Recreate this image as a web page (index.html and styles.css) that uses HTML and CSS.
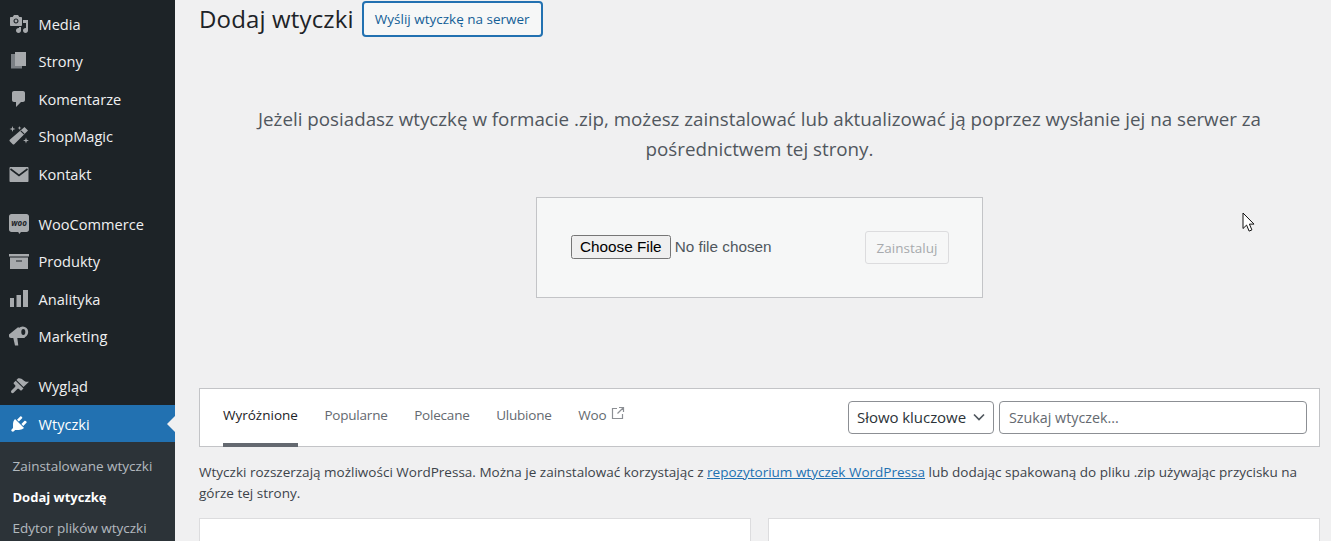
FILE: index.html
```html
<!DOCTYPE html>
<html lang="pl">
<head>
<meta charset="utf-8">
<title>Dodaj wtyczki</title>
<link rel="stylesheet" href="styles.css">
</head>
<body>
<div class="layout">
  <nav class="sidebar">
    <ul class="menu">
      <li class="item"><svg class="ico" viewBox="0 0 20 20"><path d="M13 11V4c0-.55-.45-1-1-1h-1.670L9 1H5L3.670 3H2c-.55 0-1 .45-1 1v7c0 .55.45 1 1 1h10c.55 0 1-.45 1-1zM7 4.500c1.380 0 2.500 1.120 2.500 2.500S8.380 9.500 7 9.500 4.500 8.380 4.500 7 5.620 4.500 7 4.500zM14 6h5v10.500c0 1.380-1.120 2.500-2.500 2.500S14 17.880 14 16.500s1.120-2.500 2.500-2.500c.17 0 .34.02.5.05V9h-3V6zm-4 8.050V13h2v3.500c0 1.380-1.120 2.500-2.500 2.500S7 17.880 7 16.500 8.120 14 9.500 14c.17 0 .34.02.5.05z" fill-rule="evenodd"/><circle cx="7" cy="7" r="1.400"/></svg>Media</li>
      <li class="item"><svg class="ico" viewBox="0 0 20 20"><path class="back" d="M6 3H2v14.500h11V15H6z"/><path d="M6 1h11v14H6z"/></svg>Strony</li>
      <li class="item"><svg class="ico" viewBox="0 0 20 20"><path d="M5 2h9c1.100 0 2 .9 2 2v7c0 1.100-.9 2-2 2h-2l-5 5v-5H5c-1.100 0-2-.9-2-2V4c0-1.100.9-2 2-2z"/></svg>Komentarze</li>
      <li class="item"><svg class="ico" viewBox="0 0 20 20"><path d="M15.500 1L19 4.500 5.500 18c-.7.7-1.300.7-2 0L1 15.500c-.7-.7-.7-1.300 0-2z"/><path d="M11.800 4.800l3.400 3.400" stroke="#1d2327" stroke-width="1.100"/><path d="M3.500 0l.7 2.300 2.300.7-2.300.7L3.500 6l-.7-2.300L.5 3l2.300-.7zM10.500 0l.5 1.500 1.500.5-1.500.5-.5 1.500-.5-1.500L8.500 2l1.500-.5zM17 11.500l.7 2.300 2.300.7-2.300.7-.7 2.300-.7-2.300-2.300-.7 2.300-.7z"/></svg>ShopMagic</li>
      <li class="item"><svg class="ico" viewBox="0 0 20 20"><path d="M1.500 3h17c.5 0 1 .5 1 1v13c0 .6-.5 1-1 1h-17c-.5 0-1-.4-1-1V4c0-.5.5-1 1-1z"/><path d="M1.500 5L10 11.500 18.500 5" fill="none" stroke="#1d2327" stroke-width="1.600"/></svg>Kontakt</li>
      <li class="sep"></li>
      <li class="item"><svg class="ico" viewBox="0 0 20 20"><path d="M2.500 0h15C18.900 0 20 1.100 20 2.500v13c0 1.400-1.100 2.500-2.500 2.500H12l-1.800 2-.9-2H2.500C1.100 18 0 16.900 0 15.500v-13C0 1.100 1.100 0 2.500 0z"/><text class="woo" x="10" y="11.600" text-anchor="middle">woo</text></svg>WooCommerce</li>
      <li class="item"><svg class="ico" viewBox="0 0 20 20"><path d="M0 3h20v2.500H0zM1 6.500h18V18H1zM7 9.500v1h6v-1z" fill-rule="evenodd"/></svg>Produkty</li>
      <li class="item"><svg class="ico" viewBox="0 0 20 20"><path d="M1 9h4v9H1zM7.500 6H12v12H7.500zM14 1h5v17h-5z"/></svg>Analityka</li>
      <li class="item"><svg class="ico" viewBox="0 0 20 20"><path d="M0 8.500L9.300 1 16 12H8.300l1 7.500H6L4.300 12H2c-1.300 0-2-.7-2-2z"/><circle cx="13.700" cy="6" r="5.500"/><ellipse cx="14.300" cy="6" rx="2" ry="2.900" fill="#1d2327"/></svg>Marketing</li>
      <li class="sep"></li>
      <li class="item"><svg class="ico" viewBox="0 0 20 20"><path d="M14.480 11.060L7.410 3.990l1.500-1.500c.5-.56 2.300-.47 3.510.32 1.210.8 1.430 1.280 2.910 2.100 1.180.64 2.450 1.260 4.680.75l-5.530 5.400zm-.71.71L6.700 4.700 4.930 6.470c-.39.39-.39 1.020 0 1.410l1.060 1.060c.59.56.59 1.530 0 2.120l-3.530 3.530c-.59.59-.59 1.540 0 2.120.59.59 1.540.59 2.120 0l3.530-3.530c.59-.59 1.540-.59 2.120 0l1.060 1.060c.39.39 1.020.39 1.410 0l1.770-1.770z"/></svg>Wygląd</li>
      <li class="item current"><svg class="ico" viewBox="0 0 20 20"><path d="M13.110 4.360L9.870 7.600 8 5.730l3.240-3.240c.35-.34 1.050-.2 1.560.32.52.51.66 1.210.31 1.550zm-8 1.770l.91-1.120 9.010 9.010-1.190.84c-.71.71-2.630 1.160-3.820 1.160H6.140L4.900 17.260c-.59.59-1.540.59-2.120 0-.59-.58-.59-1.530 0-2.120l1.240-1.240v-3.880c0-1.130.4-3.190 1.090-3.890zm7.260 3.970l3.240-3.240c.34-.35 1.040-.21 1.550.31.52.51.66 1.210.31 1.550l-3.240 3.250z"/></svg>Wtyczki<span class="notch"></span></li>
    </ul>
    <ul class="submenu">
      <li>Zainstalowane wtyczki</li>
      <li class="on">Dodaj wtyczkę</li>
      <li>Edytor plików wtyczki</li>
    </ul>
  </nav>
  <main class="main">
    <header class="head">
      <h1 class="title">Dodaj wtyczki</h1>
      <button class="upload-toggle" type="button">Wyślij wtyczkę na serwer</button>
    </header>
    <section class="upload">
      <p class="help">Jeżeli posiadasz wtyczkę w formacie .zip, możesz zainstalować lub aktualizować ją poprzez wysłanie jej na serwer za pośrednictwem tej strony.</p>
      <form class="upload-form">
        <input class="file" type="file">
        <button class="install" type="button" disabled>Zainstaluj</button>
      </form>
    </section>
    <div class="filter">
      <ul class="tabs">
        <li class="tab active">Wyróżnione</li>
        <li class="tab">Popularne</li>
        <li class="tab">Polecane</li>
        <li class="tab">Ulubione</li>
        <li class="tab">Woo <svg class="ext" viewBox="0 0 14 14"><path d="M6 2.500H1.500v10h10V8M8 1.500h4.500V6M12.500 1.500L6.500 7.500" fill="none" stroke="currentColor" stroke-width="1.200"/></svg></li>
      </ul>
      <form class="search">
        <div class="select">Słowo kluczowe<svg class="chev" viewBox="0 0 12 8"><path d="M1 1.500l5 5 5-5" fill="none" stroke="#50575e" stroke-width="1.700"/></svg></div>
        <input class="query" type="search" placeholder="Szukaj wtyczek...">
      </form>
    </div>
    <p class="note">Wtyczki rozszerzają możliwości WordPressa. Można je zainstalować korzystając z <a href="#">repozytorium wtyczek WordPressa</a> lub dodając spakowaną do pliku .zip używając przycisku na górze tej strony.</p>
    <div class="cards">
      <div class="card"></div>
      <div class="card"></div>
    </div>
  </main>
</div>
<svg class="cursor" viewBox="0 0 14 21"><path d="M1 1v15.500l3.600-3.400 2.500 6 2.800-1.200-2.500-5.800H12z" fill="#fff" stroke="#111" stroke-width="1"/></svg>
</body>
</html>
```
FILE: styles.css
```css
* { box-sizing: border-box; }
html, body { margin: 0; padding: 0; height: 541px; overflow: hidden; }
body { background: #f0f0f1; font-family: "Open Sans", "Noto Sans", sans-serif; color: #3c434a; font-size: 13.500px; }
ul { list-style: none; margin: 0; padding: 0; }
.layout { display: flex; height: 541px; overflow: hidden; }
.sidebar { width: 175px; flex: none; background: #1d2327; padding-top: 4.750px; color: #f0f0f1; }
.item { height: 37.500px; display: flex; align-items: center; font-size: 14.600px; padding-left: 9px; position: relative; }
.ico { width: 20px; height: 20px; margin-right: 9.500px; fill: #a7aaad; flex: none; }
.back { fill: #7b8085; }
.sep { height: 12.500px; }
.current { background: #2271b1; color: #fff; }
.current .ico { fill: #fff; }
.notch { position: absolute; right: 0; top: 50%; margin-top: -8px; border: 8px solid transparent; border-right-color: #f0f0f1; border-left-width: 0; }
.woo { font-size: 8px; font-weight: 700; font-style: italic; fill: #1d2327; stroke: none; font-family: "Open Sans", sans-serif; }
.submenu { background: #2c3338; padding: 8.500px 0 0 12.500px; font-size: 13.500px; }
.submenu li { height: 31px; line-height: 31px; color: rgba(240,246,252,.7); white-space: nowrap; }
.submenu .on { color: #fff; font-weight: 700; font-size: 13px; }
.main { flex: 1; min-width: 0; padding: 0 11px 0 24px; }
.head { display: flex; align-items: center; height: 37px; gap: 8px; }
.title { margin: 0; font-size: 24px; font-weight: 400; color: #1d2327; letter-spacing: .15px; white-space: nowrap; }
.upload-toggle { height: 36px; width: 181px; padding: 0; border: 2px solid #2271b1; border-radius: 4px; background: #f6f7f7; color: #135e96; font: 13.500px "Open Sans", sans-serif; }
.upload { display: flex; flex-direction: column; align-items: center; padding-top: 67px; }
.help { margin: 0; width: 1040px; text-align: center; font-size: 18.780px; line-height: 30px; color: #50575e; }
.upload-form { width: 447px; height: 101px; margin-top: 33px; background: #f6f7f7; border: 1px solid #c3c4c7; display: flex; align-items: center; justify-content: space-between; padding: 0 33px 0 34px; }
.file { font: 15.300px "Liberation Sans", sans-serif; color: #50575e; width: 270px; margin-bottom: 1px; }
.file::file-selector-button { padding: 1px 7px; margin-right: 4px; }
.install { width: 84px; height: 33px; background: #f6f7f7; border: 1px solid #dcdcde; border-radius: 3px; color: #a7aaad; font: 13.500px "Open Sans", sans-serif; padding: 0; }
.filter { margin-top: 90px; height: 59px; background: #fff; border: 1px solid #c3c4c7; display: flex; justify-content: space-between; padding: 0 12px 0 23px; }
.tabs { display: flex; gap: 26.500px; }
.tab { height: 58px; padding-top: 17px; font-size: 13.500px; color: #646970; white-space: nowrap; letter-spacing: -0.2px; }
.tab.active { color: #1d2327; border-bottom: 4px solid #646970; letter-spacing: 0; }
.ext { width: 14px; height: 14px; color: #8c8f94; margin-left: 1px; vertical-align: 0; }
.search { display: flex; gap: 5px; padding-top: 12px; }
.select { width: 146px; height: 33px; background: #fff; border: 1px solid #8c8f94; border-radius: 4px; display: flex; align-items: center; justify-content: space-between; padding: 0 8px 1px; font-size: 15px; color: #2c3338; letter-spacing: -0.05px; white-space: nowrap; }
.chev { width: 12px; height: 8px; flex: none; }
.query { width: 308px; height: 33px; background: #fff; border: 1px solid #8c8f94; border-radius: 4px; padding: 0 9px; font: 14.300px "Open Sans", sans-serif; }
.query::placeholder { color: #646970; opacity: 1; }
.note { margin: 15px 0 0; font-size: 13.530px; line-height: 21px; color: #3c434a; }
.note a { color: #2271b1; }
.cards { display: flex; gap: 17px; margin-top: 14px; }
.card { flex: 1; height: 60px; background: #fff; border: 1px solid #dcdcde; }
.cursor { position: absolute; left: 1242px; top: 212px; width: 14px; height: 21px; }
```
